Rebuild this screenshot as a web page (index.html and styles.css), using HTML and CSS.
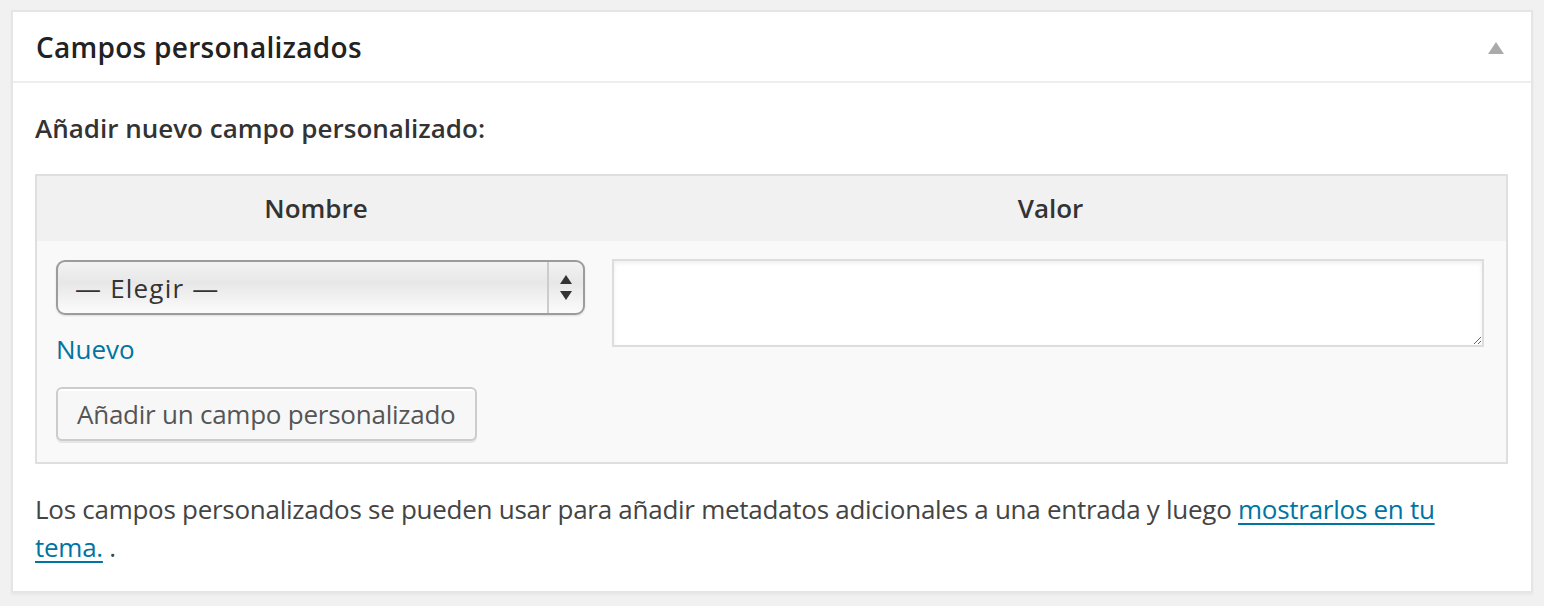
FILE: index.html
```html
<!DOCTYPE html>
<html lang="es">
<head>
<meta charset="utf-8">
<title>Campos personalizados</title>
<link rel="stylesheet" href="styles.css">
</head>
<body>
<div class="postbox">
  <div class="hndle">
    <h3 class="hndle-title">Campos personalizados</h3>
    <svg class="toggle" width="16" height="12" viewBox="0 0 16 12"><polygon points="0,12 8,0 16,12" fill="#aaaaaa"/></svg>
  </div>
  <div class="inside">
    <p class="add-title">Añadir nuevo campo personalizado:</p>
    <table class="newmeta">
      <thead>
        <tr><th class="col-left">Nombre</th><th class="col-right">Valor</th></tr>
      </thead>
      <tbody>
        <tr>
          <td class="cell-left">
            <div class="select">
              <span class="select-label">— Elegir —</span>
              <span class="select-arrows">
                <svg width="12" height="25" viewBox="0 0 12 25"><polygon points="0,9 6,0 12,9" fill="#333"/><polygon points="0,16 12,16 6,25" fill="#333"/></svg>
              </span>
            </div>
            <a class="nuevo" href="#">Nuevo</a>
            <button class="button" type="button">Añadir un campo personalizado</button>
          </td>
          <td class="cell-right">
            <textarea class="metavalue"></textarea>
          </td>
        </tr>
      </tbody>
    </table>
    <p class="note">Los campos personalizados se pueden usar para añadir metadatos adicionales a una entrada y luego <a href="#">mostrarlos en tu tema.</a> .</p>
  </div>
</div>
</body>
</html>
```

FILE: styles.css
```css
html, body {
  margin: 0;
  background: #f1f1f1;
}
body {
  padding: 10px 11px;
  font-family: "Open Sans", "Noto Sans", sans-serif;
  color: #444;
}
.postbox {
  background: #fff;
  border: 2px solid #e5e5e5;
  box-shadow: 0 2px 2px rgba(0, 0, 0, 0.04);
}
.hndle {
  display: flex;
  align-items: center;
  justify-content: space-between;
  padding: 15px 27px 14px 23px;
  border-bottom: 2px solid #eeeeee;
}
.hndle-title {
  margin: 0;
  font-size: 28px;
  line-height: 40px;
  font-weight: 600;
  letter-spacing: 0.28px;
  color: #222;
}
.toggle {
  display: block;
  margin-top: 2px;
}
.inside {
  padding: 0 23px 25px 22px;
}
.add-title {
  margin: 26px 0 26px;
  font-size: 26px;
  line-height: 39px;
  font-weight: 600;
  color: #333;
}
.newmeta {
  width: 100%;
  border: 2px solid #dfdfdf;
  border-spacing: 0;
  border-collapse: separate;
  background: #f9f9f9;
}
.newmeta th {
  background: #f1f1f1;
  font-size: 26px;
  line-height: 39px;
  font-weight: 600;
  color: #333;
  text-align: center;
  padding: 13px 10px 13px;
}
.col-left {
  width: 558px;
}
.newmeta td {
  vertical-align: top;
  padding: 0;
}
.cell-left {
  padding: 19px 10px 21px 19px !important;
}
.cell-right {
  padding: 18px 22px 0 17px !important;
}
.select {
  box-sizing: border-box;
  width: 529px;
  height: 55px;
  display: flex;
  align-items: stretch;
  border: 2px solid #9c9c9c;
  border-radius: 9px;
  background: linear-gradient(#f3f3f3 0%, #e7e7e7 40%, #ececec 55%, #fbfbfb 100%);
  box-shadow: 0 1px 2px rgba(0, 0, 0, 0.12);
}
.select-label {
  flex: 1;
  display: flex;
  align-items: center;
  padding-left: 17px;
  font-size: 26px;
  letter-spacing: 1.2px;
  color: #333;
}
.select-arrows {
  width: 34px;
  display: flex;
  align-items: center;
  justify-content: center;
  border-left: 2px solid #cccccc;
}
.nuevo {
  display: block;
  margin-top: 15px;
  font-size: 26px;
  line-height: 39px;
  color: #0074a2;
  text-decoration: none;
  width: max-content;
}
.button {
  display: block;
  margin-top: 18px;
  height: 54px;
  padding: 0 19px;
  border: 2px solid #cccccc;
  border-radius: 6px;
  background: #f7f7f7;
  box-shadow: inset 0 2px 0 #fff, 0 2px 0 rgba(0, 0, 0, 0.08);
  font-family: "Open Sans", "Noto Sans", sans-serif;
  font-size: 26px;
  line-height: 50px;
  letter-spacing: -0.24px;
  color: #555;
  cursor: pointer;
}
.metavalue {
  display: block;
  box-sizing: border-box;
  width: 872px;
  height: 88px;
  margin: 0;
  border: 2px solid #dddddd;
  background: #fff;
  box-shadow: inset 0 2px 4px rgba(0, 0, 0, 0.07);
  font-family: "Open Sans", "Noto Sans", sans-serif;
  font-size: 26px;
}
.note {
  margin: 26px 0 0;
  font-size: 26px;
  line-height: 38px;
  letter-spacing: -0.27px;
  color: #444;
}
.note a {
  color: #0074a2;
  text-decoration: underline;
  text-underline-offset: 4px;
  text-decoration-thickness: 2px;
}
```
